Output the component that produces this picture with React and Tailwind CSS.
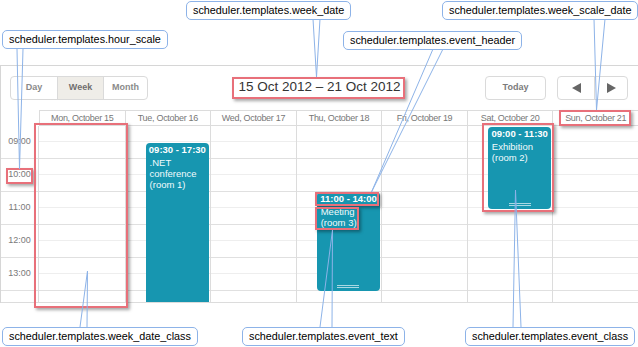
import React from 'react';

const days = [
  'Mon, October 15',
  'Tue, October 16',
  'Wed, October 17',
  'Thu, October 18',
  'Fri, October 19',
  'Sat, October 20',
  'Sun, October 21',
];

// last row is only partly visible, so it gets no label
const hours = ['09:00', '10:00', '11:00', '12:00', '13:00', ''];

const Event = ({ className, time, lines, handle }) => (
  <div className={`absolute left-[20px] right-[1px] bg-[#1796b0] text-white ${className}`}>
    <div className="h-[14px] text-center text-[9.5px] font-bold leading-[14px]">{time}</div>
    <div className="px-[4px] text-[9.5px] leading-[11px] text-[#f2fbfd]">
      {lines.map((l) => (
        <div key={l}>{l}</div>
      ))}
    </div>
    {handle && (
      <div className="absolute bottom-[3px] left-1/2 -translate-x-1/2 w-[22px] h-[3px] border-y border-[#a9d8e3]" />
    )}
  </div>
);

const Callout = ({ className, children }) => (
  <div className={`absolute h-[19px] px-[6px] bg-white border border-[#8db3e8] rounded-[5px] text-[10.8px] leading-[17px] text-black whitespace-nowrap ${className}`}>
    {children}
  </div>
);

const Mark = ({ className }) => (
  <div className={`absolute border-2 border-[#e8707a] shadow-[2px_2px_3px_rgba(0,0,0,0.35)] ${className}`} />
);

const App = () => {
  return (
    <div className="relative w-[638px] h-[347px] bg-white overflow-hidden font-['Liberation_Sans',Arial,sans-serif]">
      <div className="pt-[65px]">
        <div className="w-[638px] border-t border-l border-[#d6d6d6]">
          {/* Toolbar */}
          <div className="grid grid-cols-[1fr_auto_1fr] items-center h-[44px] pb-[1px]">
            <div className="pl-[9px]">
              <div className="flex w-[138px] h-[24px] border border-[#dadada] rounded-[4px] overflow-hidden text-[9px] font-bold">
                <div className="w-[46px] flex items-center justify-center text-[#8a8a8a]">Day</div>
                <div className="w-[47px] flex items-center justify-center bg-[#efede8] border-x border-[#dadada] text-[#6f6f6f]">Week</div>
                <div className="flex-1 flex items-center justify-center text-[#8a8a8a]">Month</div>
              </div>
            </div>
            <div className="text-[13.5px] text-[#333] px-[5px]">15 Oct 2012 – 21 Oct 2012</div>
            <div className="flex justify-end pr-[10px] gap-[11px]">
              <div className="w-[61px] h-[24px] border border-[#dadada] rounded-[4px] flex items-center justify-center text-[9px] font-bold text-[#7b7b7b]">
                Today
              </div>
              <div className="flex w-[71px] h-[24px] border border-[#dadada] rounded-[4px]">
                <div className="w-[37px] flex items-center justify-center border-r border-[#dadada]">
                  <svg width="9" height="10" viewBox="0 0 9 10"><polygon points="9,0 9,10 0,5" fill="#666" /></svg>
                </div>
                <div className="flex-1 flex items-center justify-center">
                  <svg width="9" height="10" viewBox="0 0 9 10"><polygon points="0,0 0,10 9,5" fill="#666" /></svg>
                </div>
              </div>
            </div>
          </div>

          {/* Day header */}
          <div className="flex h-[16px]">
            <div className="w-[38px] shrink-0" />
            <div className="flex-1 grid grid-cols-7 border-t border-b border-[#dcdcdc]">
              {days.map((d) => (
                <div key={d} className="border-l border-[#dcdcdc] text-center text-[9px] tracking-[-0.3px] leading-[14px] text-[#777]">
                  {d}
                </div>
              ))}
            </div>
          </div>

          {/* Body */}
          <div className="flex h-[177px] overflow-hidden border-b border-[#dcdcdc]">
            <div className="w-[38px] shrink-0 border-r border-[#dcdcdc]">
              {hours.map((h, i) => (
                <div key={i} className="h-[33px] border-b border-[#e0e0e0] flex items-center justify-center text-[9px] text-[#7a7a7a]">
                  {h}
                </div>
              ))}
            </div>
            <div className="flex-1 grid grid-cols-7">
              {days.map((d, i) => (
                <div key={d} className="relative border-l border-[#dcdcdc] first:border-l-0">
                  {hours.map((h, j) => (
                    <div key={j} className="h-[33px] border-b border-[#e0e0e0]">
                      <div className="h-[16px] border-b border-[#eeeeee]" />
                    </div>
                  ))}
                  {i === 1 && (
                    <Event className="top-[17px] h-[264px] rounded-t-[4px]" time="09:30 - 17:30" lines={['.NET', 'conference', '(room 1)']} />
                  )}
                  {i === 3 && (
                    <Event className="top-[66px] h-[99px] rounded-[4px]" time="11:00 - 14:00" lines={['Meeting', '(room 3)']} handle />
                  )}
                  {i === 5 && (
                    <Event className="top-[1px] h-[82px] rounded-[4px]" time="09:00 - 11:30" lines={['Exhibition', '(room 2)']} handle />
                  )}
                </div>
              ))}
            </div>
          </div>
        </div>
      </div>

      {/* Highlights */}
      <Mark className="left-[6px] top-[168px] w-[27px] h-[16px]" />
      <Mark className="left-[232px] top-[77px] w-[173px] h-[22px]" />
      <Mark className="left-[34px] top-[123px] w-[94px] h-[185px]" />
      <Mark className="left-[315px] top-[192px] w-[64px] h-[14px]" />
      <Mark className="left-[315px] top-[207px] w-[44px] h-[23px]" />
      <Mark className="left-[559px] top-[110px] w-[72px] h-[16px]" />
      <Mark className="left-[482px] top-[123px] w-[72px] h-[89px]" />

      {/* Pointer lines */}
      <svg className="absolute left-0 top-0 pointer-events-none" width="638" height="347" viewBox="0 0 638 347">
        <g fill="none" stroke="#8db3e8" strokeWidth="1">
          <polyline points="17,49 19.5,169 23,49" />
          <polyline points="313,19 316.5,77 320,19" />
          <polyline points="433,49 371.5,192 443,49" />
          <polyline points="594,19 596.5,110 605,19" />
          <polyline points="80,327 87.5,271 87,327" />
          <polyline points="320,327 332.5,230 332,327" />
          <polyline points="513,327 515.5,190 521,327" />
        </g>
      </svg>

      {/* Callouts */}
      <Callout className="left-[186px] top-[1px]">scheduler.templates.week_date</Callout>
      <Callout className="left-[442px] top-[1px]">scheduler.templates.week_scale_date</Callout>
      <Callout className="left-[2px] top-[30px]">scheduler.templates.hour_scale</Callout>
      <Callout className="left-[343px] top-[31px]">scheduler.templates.event_header</Callout>
      <Callout className="left-[2px] top-[327px]">scheduler.templates.week_date_class</Callout>
      <Callout className="left-[242px] top-[327px]">scheduler.templates.event_text</Callout>
      <Callout className="left-[465px] top-[327px]">scheduler.templates.event_class</Callout>
    </div>
  );
};

export default App;
